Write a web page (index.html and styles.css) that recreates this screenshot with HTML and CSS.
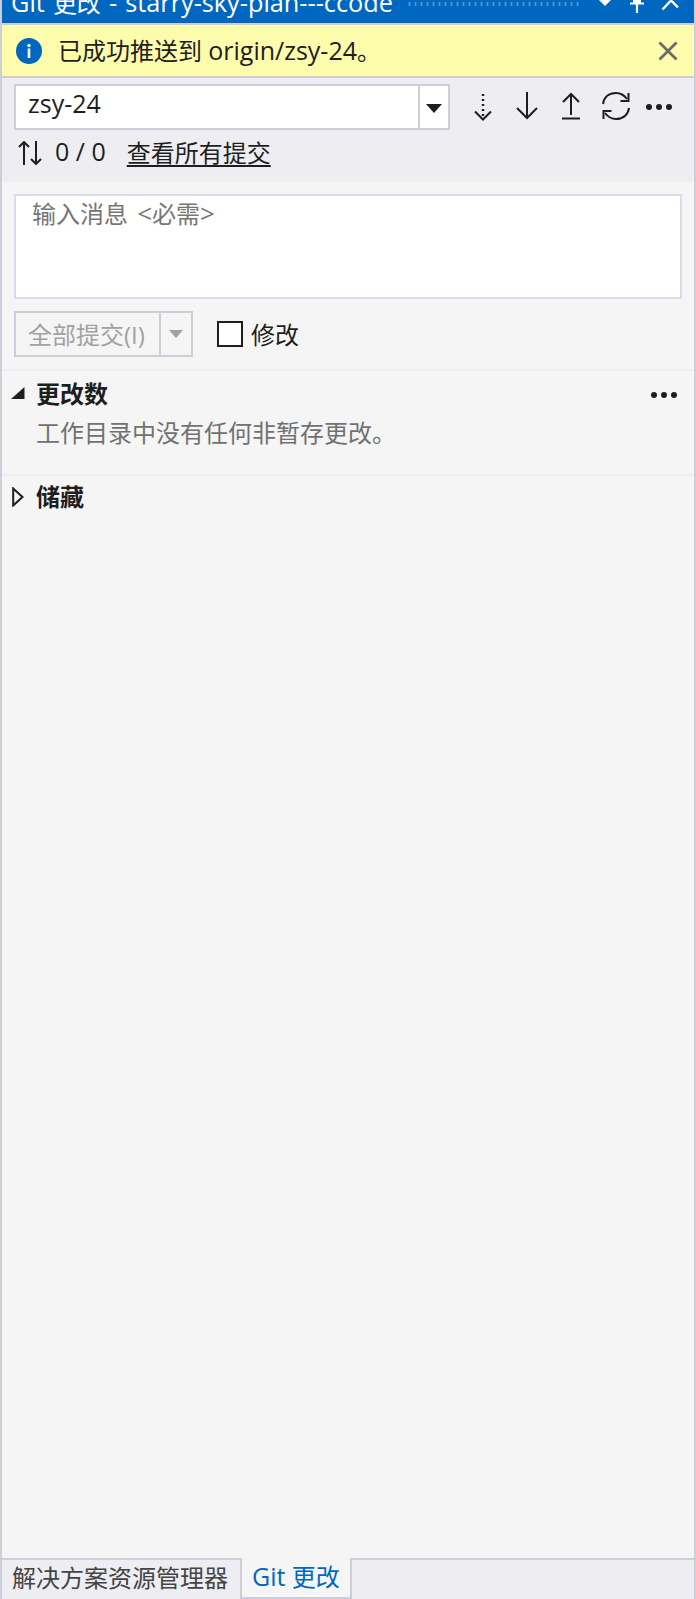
FILE: index.html
```html
<!DOCTYPE html>
<html lang="zh-CN">
<head>
<meta charset="utf-8">
<title>Git 更改</title>
<link rel="stylesheet" href="styles.css">
</head>
<body>
<div class="panel">
  <header class="title">
    <span class="title-text">Git <span class="cjk">更改</span> - starry-sky-plan---ccode</span>
    <span class="grip"></span>
    <div class="title-btns">
      <svg class="tb-caret" width="14" height="6" viewBox="0 0 14 6"><path d="M1 0h12L7 6z" fill="#fff"/></svg>
      <svg class="tb-pin" width="16" height="13" viewBox="0 0 16 13"><path d="M1 3.500h14M8 3.500V13" stroke="#fff" stroke-width="2.200" fill="none"/><path d="M4 0h8v3H4z" fill="#fff"/></svg>
      <svg class="tb-close" width="20" height="11" viewBox="0 0 20 11"><path d="M3-7 17 7.500M17-7 1.500 9.500" stroke="#fff" stroke-width="2.400" fill="none"/></svg>
    </div>
  </header>
  <div class="banner">
    <svg class="info" width="26" height="26" viewBox="0 0 26 26"><circle cx="13" cy="13" r="13" fill="#0067c0"/><rect x="11.700" y="10.500" width="2.600" height="9.500" fill="#fff"/><circle cx="13" cy="7.500" r="1.700" fill="#fff"/></svg>
    <span class="banner-text">已成功推送到 <span class="lat">origin/zsy-24</span>。</span>
    <svg class="banner-x" width="20" height="20" viewBox="0 0 20 20"><path d="M1.500 1.500 18.500 18.500M18.500 1.500 1.500 18.500" stroke="#6b6b66" stroke-width="2.800" fill="none"/></svg>
  </div>
  <section class="toolbar">
    <div class="branch-row">
      <div class="combo">
        <span class="combo-text lat">zsy-24</span>
        <span class="combo-btn"><svg width="16" height="9" viewBox="0 0 16 9"><path d="M0 0h16L8 9z" fill="#1e1e1e"/></svg></span>
      </div>
      <div class="actions">
        <svg class="ic ic-fetch" width="18" height="30" viewBox="0 0 18 30"><path d="M9 2v2M9 7v2M9 12v2M9 17v2M9 22v2" stroke="#1e1e1e" stroke-width="2.400"/><path d="M1 19.500 9 27.500 17 19.500" stroke="#1e1e1e" stroke-width="2" fill="none"/></svg>
        <svg class="ic ic-pull" width="22" height="28" viewBox="0 0 22 28"><path d="M11 0V26M1 16 11 26 21 16" stroke="#1e1e1e" stroke-width="2" fill="none"/></svg>
        <svg class="ic ic-push" width="18" height="28" viewBox="0 0 18 28"><path d="M9 2V23M1 10 9 2 17 10M0 26.500H18" stroke="#1e1e1e" stroke-width="2" fill="none"/></svg>
        <svg class="ic ic-sync" width="30" height="30" viewBox="0 0 30 30"><path d="M2 13C3 6 8 2 15 2c5 0 8 2 11 6M28 17c-1 7-6 11-13 11-5 0-8-2-11-6" stroke="#1e1e1e" stroke-width="2" fill="none"/><path d="M27.500 2V10H19.500M2.500 28V20H10.500" stroke="#1e1e1e" stroke-width="2" fill="none"/></svg>
        <svg class="ic ic-more" width="26" height="6" viewBox="0 0 26 6"><circle cx="3" cy="3" r="3" fill="#1e1e1e"/><circle cx="13" cy="3" r="3" fill="#1e1e1e"/><circle cx="23" cy="3" r="3" fill="#1e1e1e"/></svg>
      </div>
    </div>
    <div class="commit-row">
      <svg class="updown" width="24" height="24" viewBox="0 0 24 24"><path d="M6 24V1M1 6 6 1 11 6M18 0V23M13 18 18 23 23 18" stroke="#1e1e1e" stroke-width="2" fill="none"/></svg>
      <span class="counts lat">0 / 0</span>
      <a class="all-commits">查看所有提交</a>
    </div>
  </section>
  <main class="body">
    <div class="msg"><span class="placeholder">输入消息 <span class="lat">&lt;</span>必需<span class="lat">&gt;</span></span></div>
    <div class="commit-bar">
      <div class="split">
        <span class="split-main">全部提交(I)</span>
        <span class="split-arrow"><svg width="14" height="8" viewBox="0 0 14 8"><path d="M0 0h14L7 8z" fill="#a2a2a2"/></svg></span>
      </div>
      <span class="check"></span>
      <span class="check-label">修改</span>
    </div>
    <section class="group group-changes">
      <div class="group-head">
        <svg class="tri" width="14" height="12" viewBox="0 0 14 12"><path d="M13.500 0V12H0z" fill="#1e1e1e"/></svg>
        <span class="group-title">更改数</span>
        <svg class="group-more" width="26" height="6" viewBox="0 0 26 6"><circle cx="3" cy="3" r="3" fill="#1e1e1e"/><circle cx="13" cy="3" r="3" fill="#1e1e1e"/><circle cx="23" cy="3" r="3" fill="#1e1e1e"/></svg>
      </div>
      <p class="group-note">工作目录中没有任何非暂存更改。</p>
    </section>
    <section class="group group-stash">
      <div class="group-head">
        <svg class="tri-open" width="12" height="20" viewBox="0 0 12 20"><path d="M1.200 1.500V18.500L10.500 10z" stroke="#1e1e1e" stroke-width="2" fill="none"/></svg>
        <span class="group-title">储藏</span>
      </div>
    </section>
  </main>
  <nav class="tabs">
    <span class="tab">解决方案资源管理器</span>
    <span class="tab tab-active"><span class="lat">Git</span> 更改</span>
  </nav>
</div>
</body>
</html>
```
FILE: styles.css
```css
* { box-sizing: border-box; }
html, body { margin: 0; padding: 0; height: 100%; overflow: hidden; }
body {
  font-family: "Open Sans", "Noto Sans CJK SC", sans-serif;
  font-size: 24px;
  color: #1e1e1e;
  background: #f5f5f5;
}
.lat { font-size: 25px; }
.panel {
  display: flex;
  flex-direction: column;
  height: 1599px;
  width: 696px;
  border-left: 2px solid #ccceda;
  border-right: 2px solid #ccceda;
}
.title {
  flex: 0 0 23px;
  display: flex;
  align-items: flex-end;
  background: #0067c0;
  color: #fff;
  overflow: hidden;
  padding-left: 9px;
}
.title-text {
  font-size: 25.300px;
  word-spacing: 1.500px;
  line-height: 32px;
  white-space: nowrap;
  margin-bottom: 4px;
}
.title-text .cjk { font-size: 24px; }
.grip {
  flex: 0 0 174px;
  height: 4px;
  margin: 0 0 17px 15px;
  background-image: radial-gradient(circle at 1.500px 1px, #4f97d6 1px, transparent 1.200px);
  background-size: 6px 2px;
}
.title-btns { display: flex; align-items: flex-start; margin-left: auto; height: 23px; }
.tb-pin { margin: 0 0 0 17px; }
.tb-close { margin: 0 13px 0 16px; }
.banner {
  flex: 0 0 55px;
  display: flex;
  align-items: center;
  background: #fdfbac;
  border-top: 2px solid #ccceda;
  border-bottom: 2px solid #ccceda;
  padding-left: 14px;
}
.banner-text { margin-left: 16px; line-height: 32px; white-space: nowrap; }
.banner-x { margin-left: auto; margin-right: 16px; }
.toolbar {
  flex: 0 0 104px;
  background: #eeeef2;
  padding: 6px 0 0 12px;
}
.branch-row { display: flex; align-items: flex-start; }
.combo {
  width: 436px;
  height: 46px;
  display: flex;
  border: 2px solid #ccceda;
  background: #fff;
}
.combo-text { flex: 1; padding-left: 12px; line-height: 35px; }
.combo-btn {
  flex: 0 0 30px;
  border-left: 2px solid #ccceda;
  display: flex;
  align-items: center;
  justify-content: center;
  padding-top: 2px;
}
.actions { display: flex; align-items: flex-start; }
.ic-fetch { margin: 8px 0 0 24px; }
.ic-pull { margin: 8px 0 0 24px; }
.ic-push { margin: 8px 0 0 24px; }
.ic-sync { margin: 7px 0 0 21px; }
.ic-more { margin: 20px 0 0 15px; }
.commit-row { display: flex; align-items: center; height: 32px; margin-top: 5px; }
.updown { margin: 4px 0 0 4px; }
.counts { margin-left: 13px; }
.all-commits {
  margin-left: 21px;
  color: #1e1e1e;
  text-decoration: underline;
  text-underline-offset: 3px;
}
.body { flex: 1; display: flex; flex-direction: column; background: #f5f5f5; padding-top: 12px; }
.msg {
  height: 105px;
  margin: 0 12px;
  background: #fff;
  border: 2px solid #d9dbe8;
  padding-left: 16px;
  line-height: 35px;
  word-spacing: 3px;
}
.placeholder { color: #767676; }
.placeholder .lat { font-size: 26px; }
.commit-bar { display: flex; align-items: center; margin: 12px 0 12px 12px; }
.split {
  display: flex;
  width: 179px;
  height: 46px;
  border: 2px solid #ccceda;
  color: #a2a2a2;
}
.split-main { flex: 1; padding-left: 12px; line-height: 44px; white-space: nowrap; }
.split-arrow {
  flex: 0 0 32px;
  border-left: 2px solid #ccceda;
  display: flex;
  align-items: center;
  justify-content: center;
}
.check {
  width: 26px;
  height: 26px;
  margin-left: 24px;
  border: 2.500px solid #1e1e1e;
  background: #fff;
}
.check-label { margin: 2px 0 0 8px; line-height: 32px; }
.group { border-top: 2px solid #eeeef2; }
.group-changes { height: 105px; }
.group-head { display: flex; align-items: center; height: 42px; position: relative; }
.tri { margin: 2px 0 0 9px; }
.tri-open { margin-left: 10px; }
.group-title { font-weight: 700; line-height: 32px; position: absolute; left: 34px; }
.group-changes .group-title { top: 7px; }
.group-more { margin: 5px 17px 0 auto; }
.group-note { margin: 4px 0 0 34px; color: #717171; line-height: 32px; }
.tabs {
  flex: 0 0 41px;
  display: flex;
  background: #eeeef2;
  border-top: 2px solid #ccceda;
}
.tab {
  width: 238px;
  padding-left: 10px;
  line-height: 36px;
  color: #444;
  white-space: nowrap;
}
.tab-active {
  width: 112px;
  height: 41px;
  margin-top: -2px;
  padding-left: 10px;
  background: #f5f5f5;
  color: #0067c0;
  border: 2px solid #ccceda;
  border-top: 0;
}
```
